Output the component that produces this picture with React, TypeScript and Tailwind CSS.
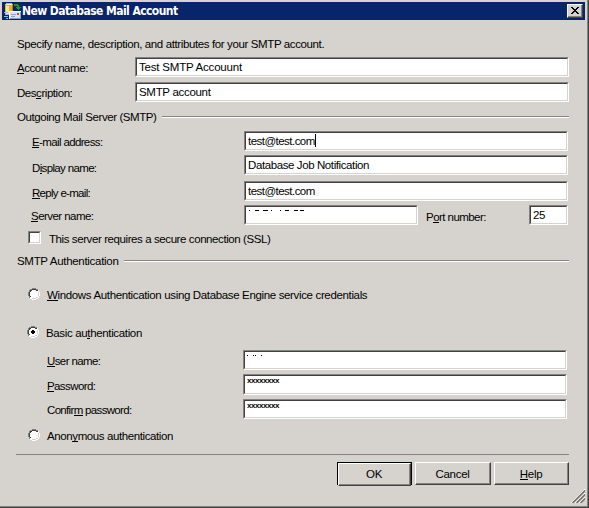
import type { ReactNode } from "react";
import clsx from "clsx";

function Field({ className, children }: { className?: string; children?: ReactNode }) {
  return (
    <div
      className={clsx(
        "flex h-5 shrink-0 border border-t-[#848284] border-r-white border-b-white border-l-[#848284]",
        className
      )}
    >
      <div className="flex-1 border border-t-[#424142] border-r-[#d6d3ce] border-b-[#d6d3ce] border-l-[#424142] bg-white pl-[2px]">
        {children}
      </div>
    </div>
  );
}

function Key({ children }: { children: ReactNode }) {
  return <span className="border-b border-black inline-block h-[13px]">{children}</span>;
}

function Group({ title, className }: { title: ReactNode; className?: string }) {
  return (
    <div className={clsx("flex h-[14px] items-center pl-px", className)}>
      {title}
      <div className="h-[2px] flex-1 border-t border-[#848284] bg-white" />
    </div>
  );
}

function Radio({ checked }: { checked?: boolean }) {
  return (
    <svg width="12" height="12" viewBox="0 0 12 12" shapeRendering="crispEdges" className="shrink-0">
      <path d="M4 1h4v1h2v2h1v4h-1v2H8v1H4v-1H2V8H1V4h1V2h2z" fill="#fff" />
      <path d="M4 0h4v1H4zM2 1h2v1H2zM8 1h2v1H8zM1 2h1v2H1zM0 4h1v4H0zM1 8h1v2H1z" fill="#848284" />
      <path d="M4 1h4v1H4zM2 2h2v1H2zM8 2h2v1H8zM2 3h1v1H2zM1 4h1v4H1zM2 8h1v1H2z" fill="#424142" />
      <path d="M10 2h1v2h-1zM11 4h1v4h-1zM10 8h1v2h-1zM8 10h2v1H8zM4 11h4v1H4zM2 10h2v1H2z" fill="#fff" />
      <path d="M10 4h1v4h-1zM8 9h2v1H8zM4 10h4v1H4z" fill="#d6d3ce" />
      {checked && <path d="M5 4h2v1h1v2H7v1H5V7H4V5h1z" fill="#000" />}
    </svg>
  );
}

function Button({ children, className }: { children: ReactNode; className?: string }) {
  return (
    <button
      className={clsx(
        "flex h-[23px] border border-t-white border-r-[#424142] border-b-[#424142] border-l-white",
        className
      )}
    >
      <span className="flex h-full flex-1 justify-center border-r border-b border-[#848284]">
        {children}
      </span>
    </button>
  );
}

function MailIcon() {
  return (
    <svg width="17" height="16" viewBox="0 0 17 16" shapeRendering="crispEdges">
      <path d="M1 1h1V0h6v1h1v10H8v1H2v-1H1z" fill="#e7b229" />
      <path d="M2 1h6v1H2z" fill="#fff3b0" />
      <path d="M2 3h3v8H2z" fill="#ffe98c" />
      <path d="M8 2h1v9H8z" fill="#b57d10" />
      <path d="M10 1h4v1h1v2h2v1h-1v1h-1v1h-1V6h-1V5h-1V4h1V3h-3z" fill="#189a21" />
      <path d="M5 8h12v8H5z" fill="#d6e3f7" />
      <path d="M5 8h12v1H5zM5 9h1v7H5z" fill="#fff" />
      <path d="M7 11h5v1H7zM7 13h4v1H7z" fill="#8ca2c6" />
      <path d="M13 10h2v2h-2z" fill="#e74131" />
      <path d="M6 15h11v1H6zM16 9h1v7h-1z" fill="#849ac6" />
      <path d="M0 9h4v1H0zM1 11h3v1H1zM0 13h4v1H0zM2 15h2v1H2z" fill="#8cbaf7" />
    </svg>
  );
}

export default function App() {
  return (
    <div className="relative h-[508px] w-[589px] overflow-hidden border-r border-b border-[#424142] bg-[#d6d3ce] font-['Liberation_Sans',Arial,sans-serif] text-[11.5px] leading-[14px] tracking-[-0.3px] whitespace-pre text-black">
      <div className="h-[507px] w-[588px] border-r border-b border-[#848284] pt-[2px] pl-[2px]">
        <div className="flex h-[18px] w-[583px] bg-[#08246b] pt-px pl-[2px] text-white">
          <MailIcon />
          <span className="ml-px pt-px font-['DejaVu_Sans_Condensed','DejaVu_Sans',sans-serif] text-[12px] font-bold leading-[14px] tracking-[-0.56px]">
            New Database Mail Account
          </span>
          <div className="mt-px ml-auto mr-[2px] flex h-[14px] w-4 border border-t-white border-r-[#424142] border-b-[#424142] border-l-white bg-[#d6d3ce]">
            <div className="flex-1 border-r border-b border-[#848284]">
              <svg width="8" height="7" viewBox="0 0 8 7" shapeRendering="crispEdges" className="mt-[2px] ml-[3px]">
                <path d="M0 0h2v1h1v1h2V1h1V0h2v1H7v1H6v1H5v1h1v1h1v1h1v1H6V6H5V5H3v1H2v1H0V6h1V5h1V4h1V3H2V2H1V1H0z" fill="#000" />
              </svg>
            </div>
          </div>
        </div>

        <div className="w-[567px] pl-[14px]">
          <div className="mt-[17px] pl-px tracking-[-0.38px]">
            Specify name, description, and attributes for your SMTP account.
          </div>
          <div className="mt-[6px] flex pl-px">
            <span className="w-[118px] pt-1 tracking-[-0.45px]"><Key>A</Key>ccount name:</span>
            <Field className="w-[434px]"><span className="block pt-px tracking-[-0.2px]">Test SMTP Accouunt</span></Field>
          </div>
          <div className="mt-[5px] flex pl-px">
            <span className="w-[118px] pt-1 tracking-[-0.45px]">Des<Key>c</Key>ription:</span>
            <Field className="w-[434px]"><span className="block pt-px">SMTP account</span></Field>
          </div>

          <Group
            className="mt-2"
            title={<span className="w-[145px] tracking-[-0.42px]">Outgoing Mail Server (SMTP)</span>}
          />
          <div className="mt-[7px] flex pl-4">
            <span className="w-[212px] pt-1 tracking-[-0.63px]"><Key>E</Key>-mail address:</span>
            <Field className="w-[324px]">
              <span className="flex pt-px tracking-[-0.53px]">
                test@test.com
                <span className="h-[13px] w-px bg-black" />
              </span>
            </Field>
          </div>
          <div className="mt-1 flex h-5 pl-4">
            <span className="w-[212px] pt-[6px] tracking-[-0.65px]">D<Key>i</Key>splay name:</span>
            <Field className="w-[324px]"><span className="block pt-px tracking-[-0.4px]">Database Job Notification</span></Field>
          </div>
          <div className="mt-[6px] flex h-5 pl-4">
            <span className="w-[212px] pt-[5px] tracking-[-0.7px]"><Key>R</Key>eply e-mail:</span>
            <Field className="w-[324px]"><span className="block pt-px tracking-[-0.53px]">test@test.com</span></Field>
          </div>
          <div className="mt-1 flex h-5 pl-[15px]">
            <span className="w-[213px] pt-1 tracking-[-0.55px]"><Key>S</Key>erver name:</span>
            <Field className="w-[174px]">
              <svg width="60" height="5" viewBox="0 0 60 5" shapeRendering="crispEdges">
                <path d="M1 3h1v1H1zM7 3h4v1H7zM15 3h5v1h-5zM23 3h1v1h-1zM32 3h1v1h-1zM37 3h4v1h-4zM46 3h4v1h-4zM52 3h4v1h-4z" fill="#000" />
              </svg>
            </Field>
            <span className="w-[111px] pt-[5px] pl-[8px] tracking-[-0.55px]">P<Key>o</Key>rt number:</span>
            <Field className="w-[39px]"><span className="block pt-px">25</span></Field>
          </div>
          <div className="mt-[6px] flex h-[13px] pl-3">
            <div className="flex size-[13px] border border-t-[#848284] border-r-white border-b-white border-l-[#848284]">
              <div className="flex-1 border border-t-[#424142] border-r-[#d6d3ce] border-b-[#d6d3ce] border-l-[#424142] bg-white" />
            </div>
            <span className="pt-px pl-2 tracking-[-0.41px]">This server requires a secure connection (SSL)</span>
          </div>

          <Group className="mt-[10px]" title={<span className="w-[107px]">SMTP Authentication</span>} />
          <div className="mt-5 flex h-3 pl-3">
            <Radio />
            <span className="pl-[7px] tracking-[-0.35px]"><Key>W</Key>indows Authentication using Database Engine service credentials</span>
          </div>
          <div className="mt-[26px] flex h-3 pl-[11px]">
            <Radio checked />
            <span className="pl-[7px] tracking-[-0.35px]">Basic au<Key>t</Key>hentication</span>
          </div>
          <div className="mt-3 flex h-5 pl-[31px]">
            <span className="w-[196px] pt-1 tracking-[-0.6px]"><Key>U</Key>ser name:</span>
            <Field className="w-[324px]">
              <svg width="30" height="5" viewBox="0 0 30 5" shapeRendering="crispEdges">
                <path d="M0 3h1v1H0zM6 3h1v1H6zM8 3h1v1H8zM14 3h1v1h-1z" fill="#000" />
              </svg>
            </Field>
          </div>
          <div className="mt-1 flex h-[21px] pl-[31px]">
            <span className="w-[196px] pt-[5px] tracking-[-0.6px]"><Key>P</Key>assword:</span>
            <Field className="h-[21px] w-[324px]">
              <span className="block text-[8px] font-bold leading-[9px] tracking-[-0.45px]">xxxxxxxx</span>
            </Field>
          </div>
          <div className="mt-1 flex h-5 pl-[31px]">
            <span className="w-[196px] pt-1 tracking-[-0.67px]">Confir<Key>m</Key> password:</span>
            <Field className="w-[324px]">
              <span className="block text-[8px] font-bold leading-[9px] tracking-[-0.45px]">xxxxxxxx</span>
            </Field>
          </div>
          <div className="mt-[10px] flex h-3 pl-3">
            <Radio />
            <span className="pl-[7px] tracking-[-0.4px]">Anon<Key>y</Key>mous authentication</span>
          </div>

          <div className="mt-[13px] h-px bg-[#848284]" />
          <div className="mt-[7px] flex justify-end">
            <div className="flex h-[23px] w-[75px] border border-black">
              <Button className="h-[21px] w-[73px]"><span className="pt-[3px]">OK</span></Button>
            </div>
            <Button className="ml-[3px] w-[76px]"><span className="pt-1">Cancel</span></Button>
            <Button className="ml-[3px] w-[75px]"><span className="pt-1"><Key>H</Key>elp</span></Button>
          </div>
        </div>
      </div>
      <svg width="14" height="14" viewBox="0 0 14 14" className="absolute top-[489px] left-[571px]">
        <path d="M0 14L14 0M4 14L14 4M8 14L14 8" stroke="#fff" />
        <path d="M1.5 14L14 1.5M5.5 14L14 5.5M9.5 14L14 9.5" stroke="#73716b" strokeWidth="1.6" />
      </svg>
    </div>
  );
}
